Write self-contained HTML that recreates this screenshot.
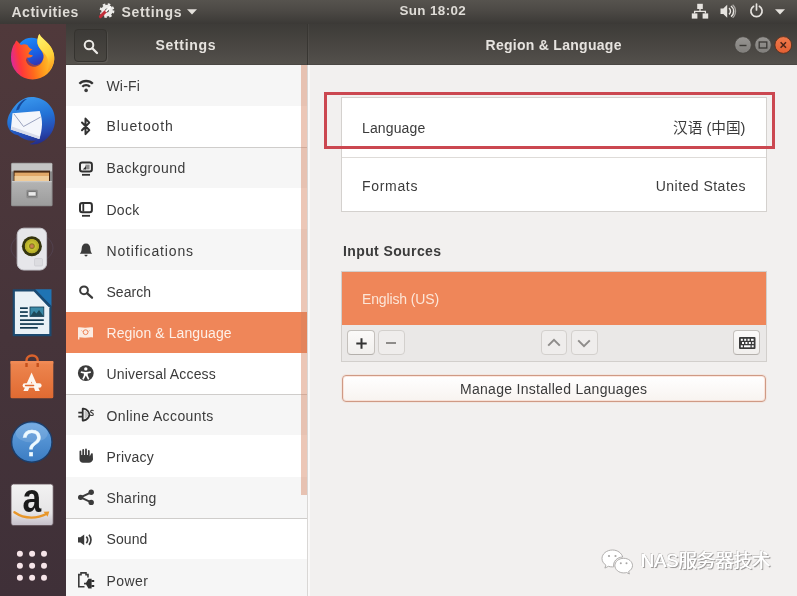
<!DOCTYPE html>
<html><head><meta charset="utf-8">
<style>
*{box-sizing:border-box;margin:0;padding:0}
html,body{width:797px;height:596px;overflow:hidden;background:#f2f0ef;font-family:"Liberation Sans","Noto Sans CJK SC",sans-serif;}
#root{position:absolute;left:0;top:0;width:797px;height:596px;will-change:transform;overflow:hidden}
.abs{position:absolute}
svg{position:absolute;overflow:visible}
#topbar{position:absolute;left:0;top:0;width:797px;height:24px;background:linear-gradient(#56534e,#4c4945 45%,#3b3936);color:#dfdcd7;font-weight:bold;font-size:14px}
#topbar span{position:absolute;top:0;line-height:24px;white-space:nowrap}
#dock{position:absolute;left:0;top:24px;width:66px;height:572px;background:linear-gradient(#50393b,#46343a 55%,#3f3038)}
#hdr{position:absolute;left:66px;top:24px;width:731px;height:41px;background:linear-gradient(#3d3b38,#474440 45%,#53504b);border-bottom:.5px solid #4a4743}
#hdr .t{position:absolute;top:0;line-height:42px;color:#e6e3df;font-weight:bold;font-size:14px;white-space:nowrap}
#side{position:absolute;left:66px;top:64.5px;width:240.500px;height:532px;background:#fff;overflow:hidden}
.row{position:absolute;left:0;width:241px;height:41.2px;font-size:14px;color:#3b3b3b;line-height:42.5px;padding-left:40.5px;white-space:nowrap}
.row.g{background:#f6f6f6}
.row.sel{background:#ef8659;color:#fdf0e8}
.sep{position:absolute;left:0;width:241px;height:1px;background:#cfcdcb}
#trough{position:absolute;left:306.500px;top:65px;width:3px;height:531px;background:linear-gradient(90deg,#d9d7d5 0,#d9d7d5 .8px,#fcfbfb .8px,#f8f7f6)}
#thumb{position:absolute;left:300.800px;top:65px;width:5.900px;height:430.200px;background:rgba(213,130,95,.45)}
#content{position:absolute;left:309.500px;top:65px;width:487.500px;height:531px;background:#f2f0ef}
.panel{position:absolute;background:#fff;border:1px solid #d4d1ce}
.lbl{position:absolute;font-size:14px;color:#3b3b3b;white-space:nowrap;line-height:20px}
.btn{position:absolute;border:1px solid #c4c0bc;border-bottom-color:#b4b0ac;border-radius:4px;background:linear-gradient(#fbfaf9,#f1efed)}
.btn.off{background:#efedec;border-color:#d3d0cd}
</style></head><body><div id="root">
<div id="topbar">
<span style="left:11.5px;letter-spacing:.5px">Activities</span>
<span style="left:121.5px;letter-spacing:.68px">Settings</span>
<span style="left:399.500px;top:-1.100px;font-size:13.400px;letter-spacing:.38px">Sun 18:02</span>
<!-- settings app icon -->
<svg style="left:99px;top:3px" width="16" height="16" viewBox="0 0 16 16">
<circle cx="8" cy="7.600" r="3.900" fill="none" stroke="#ecebe9" stroke-width="3.800"/>
<circle cx="8" cy="7.600" r="6.300" fill="none" stroke="#ecebe9" stroke-width="2.200" stroke-dasharray="2.500 2.450"/>
<path d="M1.400 13.600L6.500 8.500" stroke="#c22d38" stroke-width="3" stroke-linecap="round"/>
<path d="M7.200 8L11.500 3.800" stroke="#fbfaf9" stroke-width="1.800" stroke-linecap="round"/>
</svg>
<svg style="left:187px;top:9px" width="10" height="6" viewBox="0 0 10 6"><path d="M0 0.3h10L5 5.6z" fill="#e4e1dc"/></svg>
<!-- network -->
<svg style="left:691px;top:3px" width="18" height="17" viewBox="0 0 18 17" fill="#e6e3df">
<rect x="6.2" y="0.8" width="5.6" height="5.2"/><rect x="0.8" y="10.4" width="5.6" height="5.2"/><rect x="11.6" y="10.4" width="5.6" height="5.2"/>
<path d="M9 6v2.6M3.6 10.6V8.4h10.8v2.2" fill="none" stroke="#e6e3df" stroke-width="1.3"/>
</svg>
<!-- volume -->
<svg style="left:720px;top:3px" width="17" height="17" viewBox="0 0 17 17">
<path d="M0.5 5.6h2.8L7.2 1.8v13L3.3 11H0.5z" fill="#e6e3df"/>
<path d="M9 5.2a4 4 0 0 1 0 6.2" fill="none" stroke="#e6e3df" stroke-width="1.5"/>
<path d="M11 3a6.6 6.6 0 0 1 0 10.6" fill="none" stroke="#e6e3df" stroke-width="1.5"/>
<path d="M12.600 1.800a8.600 8.600 0 0 1 0 13" fill="none" stroke="#e6e3df" stroke-width="1.200" opacity=".6"/>
</svg>
<!-- power -->
<svg style="left:749px;top:3px" width="15" height="15" viewBox="0 0 15 15">
<path d="M4.6 3.3a5.6 5.6 0 1 0 5.8 0" fill="none" stroke="#e6e3df" stroke-width="1.7" stroke-linecap="round"/>
<path d="M7.5 1v6" stroke="#e6e3df" stroke-width="1.7" stroke-linecap="round"/>
</svg>
<svg style="left:774.5px;top:9px" width="10" height="6" viewBox="0 0 10 6"><path d="M0 0.3h10L5 5.4z" fill="#e4e1dc"/></svg>
</div>
<div id="dock">
<svg style="left:0;top:0" width="66" height="572" viewBox="0 24 66 572">
<defs>
<linearGradient id="ffo" x1="1" y1="0.400" x2="0" y2="0.600"><stop offset="0" stop-color="#ffd83a"/><stop offset=".3" stop-color="#ffa01e"/><stop offset=".55" stop-color="#ff6a1c"/><stop offset=".8" stop-color="#ff3a38"/><stop offset="1" stop-color="#dc28a0"/></linearGradient>
<linearGradient id="ffb" x1="0.300" y1="0" x2="0.700" y2="1"><stop offset="0" stop-color="#1d8cf8"/><stop offset=".6" stop-color="#1a5be0"/><stop offset="1" stop-color="#3a2aa8"/></linearGradient>
<linearGradient id="ffy" x1="0.300" y1="0" x2="0.600" y2="1"><stop offset="0" stop-color="#fff36b"/><stop offset=".6" stop-color="#ffd33a"/><stop offset="1" stop-color="#ff9a1e"/></linearGradient>
<linearGradient id="tbb" x1="0.350" y1="0" x2="0.600" y2="1"><stop offset="0" stop-color="#3a98ee"/><stop offset=".45" stop-color="#2272d6"/><stop offset=".8" stop-color="#2648b0"/><stop offset="1" stop-color="#232c88"/></linearGradient>
<linearGradient id="fg" x1="0" y1="0" x2="0" y2="1"><stop offset="0" stop-color="#b4b4b4"/><stop offset="1" stop-color="#9c9c9c"/></linearGradient>
<linearGradient id="hb" x1="0" y1="0" x2="0" y2="1"><stop offset="0" stop-color="#66a3e0"/><stop offset="1" stop-color="#3b7cc2"/></linearGradient>
<linearGradient id="am" x1="0" y1="0" x2="0" y2="1"><stop offset="0" stop-color="#f2f2f2"/><stop offset=".7" stop-color="#e6e4e6"/><stop offset="1" stop-color="#c4bec8"/></linearGradient>
<linearGradient id="sw" x1="0" y1="0" x2="0" y2="1"><stop offset="0" stop-color="#ee8750"/><stop offset="1" stop-color="#e06a32"/></linearGradient>
<radialGradient id="cone" cx=".5" cy=".5" r=".5"><stop offset="0" stop-color="#d08860"/><stop offset=".14" stop-color="#c07848"/><stop offset=".24" stop-color="#8a7c20"/><stop offset=".34" stop-color="#cac432"/><stop offset=".68" stop-color="#b2aa28"/><stop offset=".75" stop-color="#35350f"/><stop offset="1" stop-color="#35350f"/></radialGradient>
</defs>
<!-- firefox -->
<g>
<circle cx="31.500" cy="52.500" r="14.800" fill="url(#ffb)"/>
<path d="M16.600 40.600C18 42 19.500 43.500 21 45c2-1 4.500-1 6.500 0 1 2 2.500 3.500 5 4.500-2 1-3.500 2.500-4 4.500 1.500 1 3 1.200 4.500 1.500-1.500 2-4 2.500-6 2 1 4.500 5 8 9.500 7.500 4.500-.500 7.500-5 7-9.500C43 51 38.500 48.500 37.500 43.500 37 40 37.800 36.500 39.300 34c1.700 3.500 5.700 6 9.200 10 4 4.500 6.300 10 5.700 16A21.500 21.500 0 0 1 32.500 79.400 21.500 21.500 0 0 1 11 57c0-6 1.500-11 4-14 .300-1 .800-1.800 1.600-2.400z" fill="url(#ffo)"/>
<path d="M39.300 34c1.700 3.500 5.700 6 9.200 10 4 4.500 6.300 10 5.700 16-.700 5-3.200 9.500-7.200 13 2.500-6 2-13-1-17.500C43.500 51.500 38.500 48.500 37.500 43.500 37 40 37.800 36.500 39.300 34z" fill="url(#ffy)"/>
<path d="M27 57.500c1 4.500 5 8 9.500 7.500 3-.300 5.300-2.400 6.400-5-1.500 4.500-5.500 7.300-10 6.800-3.500-.400-6-3-7-6.500z" fill="#2a1f8a" opacity=".55"/>
</g>
<!-- thunderbird -->
<g>
<path d="M31.500 97c13 0 23.500 9.800 23.500 23 0 9.500-5 17.800-13.500 22.300-4.500 2.400-9.500 2.600-12 1.600 3-.500 5-1.700 6.500-3.300-7 1-13.500-1.300-18-5.300-5-1-8.500-4-10-8.500-1.500-4.500-.500-10 2.500-14.500C15 104 22.500 97 31.500 97z" fill="url(#tbb)"/>
<path d="M24 99.500c-4 2.500-7 6.500-8 11l3-1c1.500-4.500 4-8 8-10.500z" fill="#164a9c"/>
<path d="M12.500 113.200l27.200-2.200c1.500 4.500 2.500 9 2.300 13.500-.200 5.500-1.200 10.500-2.700 14.500L10.800 129.500z" fill="#f4f6fb"/>
<path d="M14 114l9.500 12.500 17.200-9.500" fill="none" stroke="#9098b8" stroke-width=".9"/>
<path d="M10.800 129.500l28.500 9.500.800-2.500-28.200-10z" fill="#d8dcea"/>
</g>
<!-- files -->
<g>
<rect x="11" y="162.800" width="41.600" height="43.400" rx="1.500" fill="#8a8a8a"/>
<rect x="11.600" y="163.400" width="40.400" height="8" fill="#c4c4c4"/>
<rect x="13.600" y="170.600" width="36.400" height="10.400" fill="#4a2a14"/>
<rect x="14.600" y="172.600" width="34.400" height="8.400" fill="#e2a868"/>
<rect x="14.600" y="176" width="34.400" height="5" fill="#f0cc9a"/>
<rect x="12" y="181" width="39.600" height="24.400" fill="url(#fg)"/>
<rect x="12" y="181" width="39.600" height="1.200" fill="#c8c8c8"/>
<rect x="26.400" y="189.800" width="11.400" height="8.400" rx="1.200" fill="#8c8c8c"/>
<rect x="28" y="191.600" width="8.200" height="4.600" rx=".6" fill="#eaeaea" stroke="#5a5a5a" stroke-width=".8"/>
</g>
<!-- rhythmbox -->
<g>
<ellipse cx="32" cy="248" rx="21" ry="15" fill="none" stroke="#5a5066" stroke-width="1" opacity=".45"/>
<rect x="17.200" y="228.200" width="29.400" height="41.800" rx="6.500" fill="#e6e6ea" stroke="#c4c4ca" stroke-width="1"/>
<circle cx="31.900" cy="246.200" r="10" fill="url(#cone)"/>
<rect x="34.500" y="258.500" width="8" height="7.500" rx="1" fill="#dcdce0" stroke="#c8c8cc" stroke-width=".6"/>
</g>
<!-- writer -->
<g>
<path d="M12.700 289.200H35l16.500 17v30.100H12.700z" fill="#1c4a70"/>
<path d="M14.900 291.400h19.200l15.200 15.800v26.900H14.900z" fill="#e9f1f6"/>
<path d="M35 289.200l16.500 17H51.500v-17z" fill="#1f74b4"/>
<path d="M35 289.200l16.500 17-3 .5L34 291.500z" fill="#174a74"/>
<g fill="#103850"><rect x="20" y="307.300" width="7.800" height="1.700"/><rect x="20" y="311.200" width="7.800" height="1.700"/><rect x="20" y="315.100" width="7.800" height="1.700"/><rect x="20" y="319.300" width="23.800" height="1.700"/><rect x="20" y="323.200" width="23.800" height="1.700"/><rect x="20" y="327" width="17.800" height="1.700"/></g>
<rect x="30" y="307" width="13.800" height="9.400" fill="#3a8aa8" stroke="#103850" stroke-width=".8"/>
<path d="M30.500 316l3.500-5 2.500 2.500 2.500-3.500 4.500 6z" fill="#1e4a5a"/>
</g>
<!-- software -->
<g>
<path d="M26.500 368v-7.500c0-3 2.200-5 5.600-5s5.600 2 5.600 5V368" fill="none" stroke="#d9622c" stroke-width="2.400"/>
<rect x="10.500" y="361" width="42.800" height="37.200" rx="1.500" fill="url(#sw)"/>
<rect x="10.500" y="361" width="42.800" height="2.600" fill="#f08a55"/>
<path d="M26.500 367v-4M37.700 367v-4" stroke="#c4501c" stroke-width="2.400"/>
<path d="M31.600 372.600l-8.200 18.400h4.600l3.600-9.500 3.600 9.500h4.600z" fill="#fdf6f0"/>
<rect x="22.600" y="383.200" width="19" height="4.600" rx="2.300" fill="#fdf6f0"/>
<rect x="24.800" y="384.800" width="9.500" height="1.400" rx=".7" fill="#e0682e"/>
</g>
<!-- help -->
<g>
<circle cx="31.800" cy="442" r="20.200" fill="url(#hb)" stroke="#1c3c68" stroke-width="1.400"/>
<ellipse cx="31.800" cy="433" rx="16" ry="9.500" fill="#fff" opacity=".12"/>
<text x="31.700" y="455.800" font-family="Liberation Sans,sans-serif" font-size="36.500" fill="#eefaff" stroke="#eefaff" stroke-width=".3" text-anchor="middle">?</text>
</g>
<!-- amazon -->
<g>
<rect x="11" y="484" width="42.200" height="41.600" rx="2.500" fill="url(#am)" stroke="#5a4a52" stroke-width=".8"/>
<text x="0" y="511.900" transform="translate(31.900 0) scale(.83 1)" font-family="Liberation Sans,sans-serif" font-weight="bold" font-size="40.500" fill="#1a1a1a" text-anchor="middle">a</text>
<path d="M14.400 512.200c5.500 3.800 11 5.400 17 5.400 5.500 0 10.500-1.300 15.500-3.800" fill="none" stroke="#e8962a" stroke-width="2.300" stroke-linecap="round"/>
<path d="M43.500 511.800l5.800-.300-1.700 5.200z" fill="#e8962a"/>
</g>
<!-- grid -->
<g fill="#f6e4e8">
<circle cx="19.900" cy="553.800" r="3"/><circle cx="32.100" cy="553.800" r="3"/><circle cx="44" cy="553.800" r="3"/>
<circle cx="19.900" cy="565.700" r="3"/><circle cx="32.100" cy="565.700" r="3"/><circle cx="44" cy="565.700" r="3"/>
<circle cx="19.900" cy="577.800" r="3"/><circle cx="32.100" cy="577.800" r="3"/><circle cx="44" cy="577.800" r="3"/>
</g>
</svg>

</div>
<div id="hdr">
<div class="abs" style="left:7.5px;top:5px;width:33px;height:32.5px;border:1px solid #35332f;border-radius:4px;background:linear-gradient(#3c3a37,#4a4742);box-shadow:1px 1px 0 rgba(255,255,255,.07)"></div>
<svg style="left:16.5px;top:14.5px" width="16" height="16" viewBox="0 0 16 16"><circle cx="6" cy="6" r="4.3" fill="none" stroke="#eceae6" stroke-width="2"/><path d="M9.3 9.3L14 14" stroke="#eceae6" stroke-width="2.3" stroke-linecap="round"/></svg>
<span class="t" style="left:89.5px;letter-spacing:.68px">Settings</span>
<span class="t" style="left:419.5px;letter-spacing:.28px">Region &amp; Language</span>
<div class="abs" style="left:240.5px;top:0;width:1px;height:41px;background:#383632;box-shadow:1px 0 0 rgba(255,255,255,.04)"></div>
<!-- window buttons -->
<svg style="left:668px;top:12px" width="60" height="18" viewBox="0 0 60 18"><defs><linearGradient id="wb" x1="0" y1="0" x2="0" y2="1"><stop offset="0" stop-color="#979592"/><stop offset="1" stop-color="#807e7b"/></linearGradient><linearGradient id="wc" x1="0" y1="0" x2="0" y2="1"><stop offset="0" stop-color="#f07a4c"/><stop offset="1" stop-color="#e35f32"/></linearGradient></defs>
<circle cx="9" cy="9" r="8.300" fill="url(#wb)" stroke="#45423f" stroke-width=".8"/>
<circle cx="29" cy="9" r="8.300" fill="url(#wb)" stroke="#45423f" stroke-width=".8"/>
<circle cx="49.300" cy="9" r="8.400" fill="url(#wc)" stroke="#55301f" stroke-width=".9"/>
<path d="M5.5 9.5h7" stroke="#3a3835" stroke-width="1.4"/>
<rect x="25.2" y="6" width="7.6" height="6" fill="none" stroke="#3a3835" stroke-width="1.3"/>
<path d="M46.6 6.3l5.4 5.4M52 6.3l-5.4 5.4" stroke="#4a2418" stroke-width="1.5"/>
</svg>
</div>
<div id="side">
<div class="row g" style="top:0;letter-spacing:.16px">Wi-Fi
<svg style="left:10px;top:10px" width="20" height="20" viewBox="0 0 20 20" fill="none" stroke="#333" stroke-width="2.300"><circle cx="10.1" cy="15.4" r="1.800" fill="#3b3b3b" stroke="none"/><path d="M6.3 11.7a5.3 5.3 0 0 1 7.6 0"/><path d="M3.4 8.8a9.4 9.4 0 0 1 13.4 0"/></svg></div>
<div class="row" style="top:41.2px;letter-spacing:.9px"><span style="position:relative;top:-0.6px">Bluetooth</span>
<svg style="left:10px;top:10px" width="20" height="20" viewBox="0 0 20 20" fill="none" stroke="#333" stroke-width="2" stroke-linejoin="round" stroke-linecap="round"><path d="M6 6.500l7.300 7.600-3.800 4V2.600l3.800 4L6 14.300"/></svg></div>
<div class="row g" style="top:82.4px;letter-spacing:.44px"><span style="position:relative;top:0.4px">Background</span>
<svg style="left:10px;top:10px" width="20" height="20" viewBox="0 0 20 20"><rect x="4" y="5.400" width="11.900" height="9" rx="2.200" fill="none" stroke="#303030" stroke-width="2"/><path d="M6 17.800h8" stroke="#303030" stroke-width="1.800"/><rect x="9.400" y="7.600" width="4.200" height="4.800" fill="#8c8c8c"/><path d="M6.800 12.400h3.200V9z" fill="#303030"/></svg></div>
<div class="row" style="top:123.6px;letter-spacing:.26px"><span style="position:relative;top:0.6px">Dock</span>
<svg style="left:10px;top:10px" width="20" height="20" viewBox="0 0 20 20"><rect x="4" y="5.100" width="11.900" height="9.200" rx="2.200" fill="none" stroke="#303030" stroke-width="2"/><path d="M6 17.800h8" stroke="#303030" stroke-width="1.800"/><path d="M7.300 6v7.600" stroke="#303030" stroke-width="1.800"/></svg></div>
<div class="row g" style="top:164.8px;letter-spacing:.86px"><span style="position:relative;top:1.2px">Notifications</span>
<svg style="left:10px;top:10px" width="20" height="20" viewBox="0 0 20 20" fill="#3b3b3b"><path d="M10 4.4c2.800 0 4.200 2.100 4.300 4.800.100 2.400.600 4.100 1.900 5.600H3.800c1.300-1.500 1.800-3.200 1.900-5.600.100-2.700 1.500-4.800 4.300-4.800z"/><path d="M8.400 15.800h3.200a1.600 1.600 0 0 1-3.200 0z"/></svg></div>
<div class="row" style="top:206px;letter-spacing:.03px">Search
<svg style="left:10px;top:10px" width="20" height="20" viewBox="0 0 20 20" fill="none" stroke="#3b3b3b"><circle cx="8" cy="9.3" r="3.9" stroke-width="2"/><path d="M11 12.2l5 4.500" stroke-width="2.300" stroke-linecap="round"/></svg></div>
<div class="row sel" style="top:247.2px;letter-spacing:.08px">Region &amp; Language
<svg style="left:10px;top:10px" width="20" height="20" viewBox="0 0 20 20"><path d="M2 5.400c2.500-.700 5 .500 7.500.300 2.500-.200 5-.900 7.500-.300v10c-2.500-.600-5 .100-7.500.300-2.100.200-4.100-.500-6.100-.500v2.300H2z" fill="#fbece3"/><circle cx="9.600" cy="10.200" r="2.400" fill="none" stroke="#ee8457" stroke-width="1"/><path d="M5.500 8.500l1 1M13.500 8.500l-1 1" stroke="#ee8457" stroke-width=".8"/></svg></div>
<div class="row" style="top:288.4px;letter-spacing:.18px">Universal Access
<svg style="left:10px;top:10px" width="20" height="20" viewBox="0 0 20 20"><circle cx="9.800" cy="10.100" r="7.900" fill="#3b3b3b"/><circle cx="9.800" cy="5.900" r="1.700" fill="#fff"/><path d="M5 8.300c3.200.900 6.400.900 9.600 0l.400 1.400c-1.100.400-2.200.700-3.300.800l.100 2 1.600 3.600-1.400.600-2.200-4.300-2.200 4.300-1.400-.600 1.600-3.600.100-2c-1.100-.100-2.200-.400-3.300-.800z" fill="#fff"/></svg></div>
<div class="row g" style="top:329.6px;letter-spacing:.4px"><span style="position:relative;top:0.6px">Online Accounts</span>
<svg style="left:10px;top:10px" width="20" height="20" viewBox="0 0 20 20" fill="none" stroke="#3b3b3b"><path d="M6.700 4.700h.8C11 5 13.200 8 13.400 10.600 13.200 13.200 11 16.200 7.500 16.500h-.8z" stroke-width="1.800" stroke="#303030" stroke-linejoin="round"/><path d="M8.600 6.200c2 .600 3.400 2.600 3.600 4.400-.200 1.800-1.600 3.800-3.600 4.400z" fill="#c4c4c4" stroke="none"/><path d="M2.300 8.600h4.400M2.300 12.700h4.400" stroke-width="1.800" stroke="#303030"/><path d="M17.600 6.700c-1.500-.900-3.100-.300-3 .900.100 1.300 2.600 1.200 2.700 2.600.100 1.300-1.600 1.800-3.200.900" stroke-width="1.100"/></svg></div>
<div class="row" style="top:370.8px;letter-spacing:.22px"><span style="position:relative;top:1.0px">Privacy</span>
<svg style="left:10px;top:10px" width="20" height="20" viewBox="0 0 20 20" fill="#3b3b3b"><path d="M3.500 10V6.500a.9.9 0 0 1 1.800 0V10h1V5a.9.9 0 0 1 1.800 0v5h1V4.500a.9.900 0 0 1 1.800 0V10h1V6a.900.900 0 0 1 1.800 0v5.500l1.400-2.700c.500-.900 2-.400 1.700.800L17 14.500c-.500 2-2 3.200-4 3.200H7c-2 0-3.500-1.500-3.500-3.500z"/></svg></div>
<div class="row g" style="top:412px;letter-spacing:.24px">Sharing
<svg style="left:10px;top:10px" width="20" height="20" viewBox="0 0 20 20" fill="#3b3b3b"><circle cx="4.600" cy="10.300" r="2.600"/><circle cx="15.200" cy="5.300" r="2.700"/><circle cx="15.200" cy="15.400" r="2.700"/><path d="M15.200 5.300L4.600 10.300l10.600 5.100" fill="none" stroke="#3b3b3b" stroke-width="2"/></svg></div>
<div class="row" style="top:453.200px;letter-spacing:.1px"><span style="position:relative;top:0.8px">Sound</span>
<svg style="left:10px;top:10px" width="20" height="20" viewBox="0 0 20 20" fill="none" stroke="#3b3b3b"><path d="M2 9.200h2.400L8.200 6.500v10.700l-3.800-2.700H2z" fill="#3b3b3b" stroke="none"/><path d="M10.300 8.600a4.500 4.500 0 0 1 0 6.500" stroke-width="1.700"/><path d="M13 6.800a7.500 7.500 0 0 1 0 10.100" stroke-width="1.700"/></svg></div>
<div class="row g" style="top:494.400px;letter-spacing:.45px"><span style="position:relative;top:0.9px">Power</span>
<svg style="left:10px;top:10px" width="20" height="20" viewBox="0 0 20 20" fill="none" stroke="#3b3b3b"><path d="M12 8.500V5.600h-2V3.900H5v1.700H2.800v12.200h5.700" stroke-width="1.600"/><path d="M8 14.600h2.500" stroke-width="1.700"/><path d="M9.600 14.600l2.800-4.800h3.200v9.600h-3.200z" fill="#303030" stroke="none"/><path d="M15.400 12h2.800M15.400 17.100h2.800" stroke-width="2" stroke="#303030"/></svg></div>
<div class="sep" style="top:82.400px"></div>
<div class="sep" style="top:329.400px"></div>
<div class="sep" style="top:453.600px"></div>
</div>
<div id="content"></div>
<div id="trough"></div><div id="thumb"></div>
<div class="panel" style="left:341px;top:96.500px;width:425.500px;height:115px"></div>
<div class="abs" style="left:342px;top:156.500px;width:423.500px;height:1px;background:#dedbd8"></div>
<div class="lbl" style="left:362px;top:117.500px;letter-spacing:.13px">Language</div>
<div class="lbl" style="right:51.500px;top:117.500px;font-size:14.670px">汉语 (中国)</div>
<div class="lbl" style="left:362px;top:175.700px;letter-spacing:.68px">Formats</div>
<div class="lbl" style="right:51px;top:175.700px;letter-spacing:.48px">United States</div>
<div class="abs" style="left:324px;top:91.500px;width:451px;height:57.500px;border:3px solid #cb4750"></div>
<div class="lbl" style="left:343px;top:241px;font-weight:bold;letter-spacing:.39px">Input Sources</div>
<div class="panel" style="left:341px;top:271px;width:425.500px;height:90.500px;background:#eae8e7;border-color:#d2cfcc"></div>
<div class="abs" style="left:341.500px;top:271.500px;width:424.500px;height:53px;background:#ef8659"></div>
<div class="lbl" style="left:362px;top:288.800px;color:#fce6d8;letter-spacing:-.14px">English (US)</div>
<div class="btn" style="left:347.400px;top:330.300px;width:27.600px;height:25.200px"></div>
<svg style="left:355.500px;top:337.500px" width="11" height="11" viewBox="0 0 11 11"><path d="M5.500 0.300v10.400M0.300 5.500h10.400" stroke="#333" stroke-width="2"/></svg>
<div class="btn off" style="left:378px;top:330.300px;width:26.800px;height:25.200px"></div>
<div class="abs" style="left:386.300px;top:342.200px;width:9.800px;height:1.800px;background:#8e8c8a"></div>
<div class="btn off" style="left:540.600px;top:330.300px;width:26.800px;height:25.200px"></div>
<svg style="left:547px;top:338px" width="14" height="9" viewBox="0 0 14 9"><path d="M1.200 7.600L7 1.800l5.800 5.800" fill="none" stroke="#8e8c8a" stroke-width="2"/></svg>
<div class="btn off" style="left:570.800px;top:330.300px;width:26.800px;height:25.200px"></div>
<svg style="left:577.200px;top:338.500px" width="14" height="9" viewBox="0 0 14 9"><path d="M1.200 1.400L7 7.200l5.800-5.800" fill="none" stroke="#8e8c8a" stroke-width="2"/></svg>
<div class="btn" style="left:733.200px;top:330.300px;width:27.200px;height:25.200px"></div>
<svg style="left:738.800px;top:336.800px" width="17" height="12" viewBox="0 0 17 12"><rect x="0" y="0" width="16.500" height="12" rx="1" fill="#3a3a3a"/><g fill="#fff"><rect x="1.800" y="1.800" width="2" height="2"/><rect x="5.200" y="1.800" width="2" height="2"/><rect x="8.600" y="1.800" width="2" height="2"/><rect x="12" y="1.800" width="2.600" height="2"/><rect x="3" y="5" width="2" height="2"/><rect x="6.400" y="5" width="2" height="2"/><rect x="9.800" y="5" width="2" height="2"/><rect x="13.200" y="5" width="1.500" height="2"/><rect x="1.800" y="8.300" width="2" height="2"/><rect x="5" y="8.300" width="6.500" height="2"/><rect x="12.700" y="8.300" width="2" height="2"/></g></svg>
<div class="btn" style="left:341.500px;top:375.300px;width:424.500px;height:26.400px;border-color:#cf9a85;background:linear-gradient(#fff,#f8f3f0);box-shadow:inset 0 0 0 1px rgba(245,190,165,.35),0 0 0 1px rgba(245,200,180,.25)"></div>
<div class="lbl" style="left:460px;top:379px;letter-spacing:.29px">Manage Installed Languages</div>
<!-- watermark -->
<svg style="left:601px;top:549px" width="33" height="26" viewBox="0 0 33 26">
<g fill="#fff" stroke="#a8a6a5" stroke-width=".9">
<path d="M11.500 1C5.700 1 1 4.800 1 9.500c0 2.700 1.500 5 3.900 6.600l-1 3 3.500-1.800c1.200.400 2.600.600 4.100.600.400 0 .800 0 1.200-.100-.900-5.300 3.300-9.600 9-9.800C20.600 4 16.500 1 11.500 1z"/>
<path d="M31.500 16.600c0-4-3.900-7.300-8.800-7.300s-8.800 3.300-8.800 7.300 3.900 7.300 8.800 7.300c1 0 2-.100 2.900-.400l2.800 1.500-.800-2.500c2.400-1.300 3.900-3.500 3.900-5.900z"/>
</g>
<g fill="#a8a6a5"><circle cx="8" cy="7" r="1.100"/><circle cx="14.500" cy="7" r="1.100"/><circle cx="19.800" cy="14.300" r="1"/><circle cx="25.500" cy="14.300" r="1"/></g>
</svg>
<div class="abs" style="left:640.500px;top:548.500px;font-size:18.500px;color:#fff;text-shadow:.5px 0 0 #fff,1.200px 1.200px 0 #9c9a99,1.500px .500px 1px #b3b1b0,-.6px -.6px 0 #cfcdcc;white-space:nowrap;line-height:24px;letter-spacing:-.1px">NAS服务器技术</div>
</div></body></html>
